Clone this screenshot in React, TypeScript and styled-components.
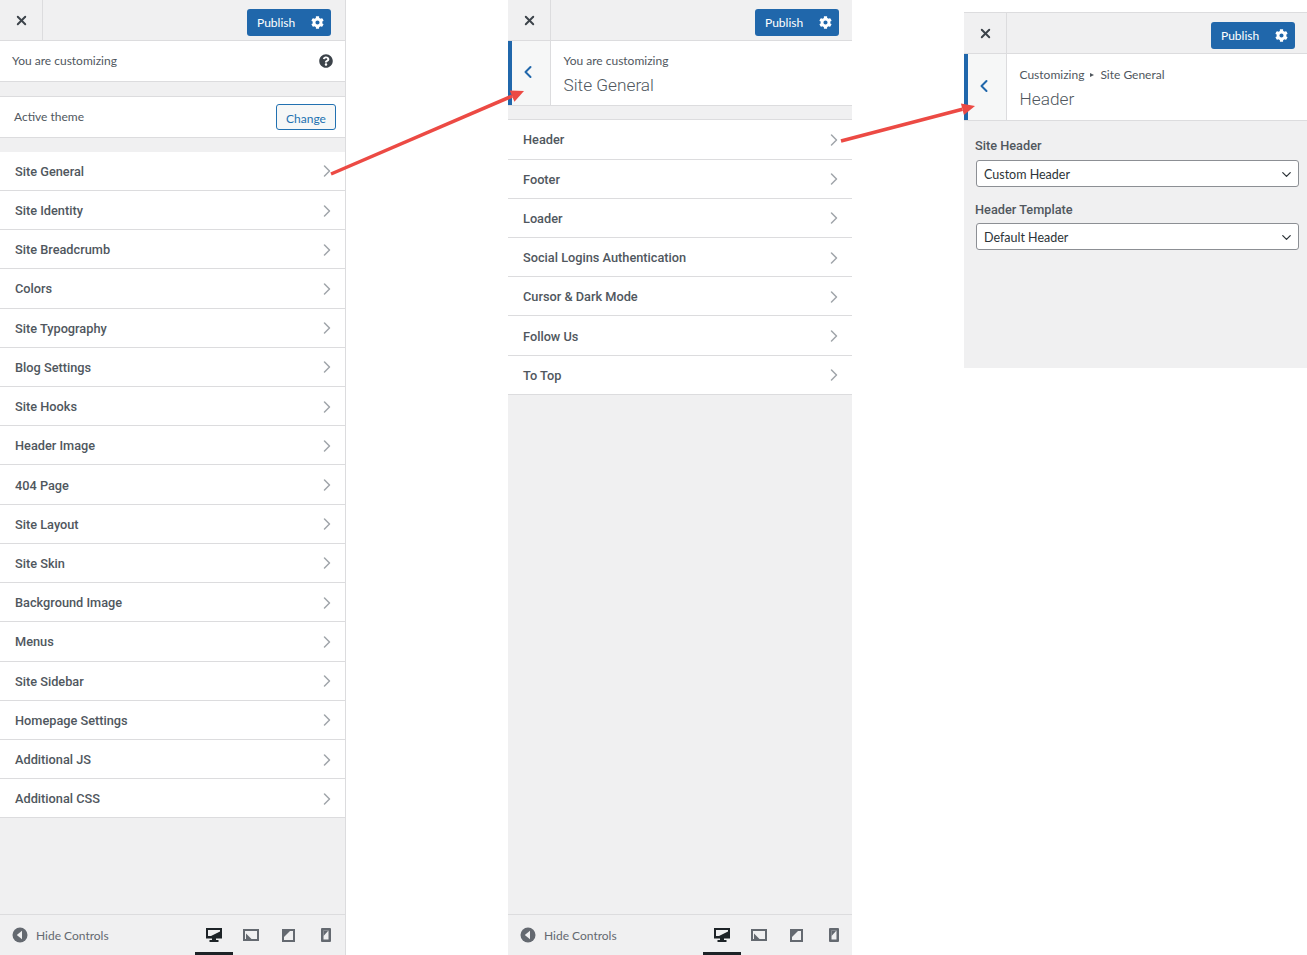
import React from "react";
import styled, { createGlobalStyle } from "styled-components";
import { FaCog, FaQuestionCircle } from "react-icons/fa";
import { ChevronDown, ChevronLeft, ChevronRight, X } from "lucide-react";

const GlobalStyle = createGlobalStyle`
  html, body { margin: 0; padding: 0; background: #fff; }
  body { font-family: Lato, Roboto, sans-serif; font-size: 12px; color: #50575e; }
  * { box-sizing: border-box; }
`;

const Page = styled.div`
  position: relative;
  width: 1307px;
  height: 955px;
  overflow: hidden;
  display: grid;
  grid-template-columns: 346px 162px 344px 112px 343px;
  align-items: start;
`;

const Panel = styled.section<{ $top?: number; $col: number; $height: number; $edge?: boolean }>`
  grid-column: ${(p) => p.$col};
  grid-row: 1;
  display: flex;
  flex-direction: column;
  margin-top: ${(p) => p.$top ?? 0}px;
  height: ${(p) => p.$height}px;
  background: #f0f0f1;
  border-right: ${(p) => (p.$edge ? "1px solid #dcdcde" : "none")};
  ${(p) => (p.$top ? "border-top: 1px solid #dcdcde;" : "")}
`;

const TopBar = styled.header<{ $pad: number }>`
  flex: 0 0 41px;
  display: flex;
  align-items: center;
  justify-content: space-between;
  border-bottom: 1px solid #dcdcde;
  padding-right: ${(p) => p.$pad}px;
`;

const CloseButton = styled.button`
  width: 43px;
  height: 40px;
  padding: 0;
  display: flex;
  align-items: center;
  justify-content: center;
  background: none;
  border: 0;
  border-right: 1px solid #dcdcde;
  color: #3c434a;
`;

const Publish = styled.div`
  width: 84px;
  height: 27px;
  display: flex;
  align-items: center;
  justify-content: space-between;
  padding: 0 7px 0 10px;
  background: #2067ab;
  color: #fff;
  border-radius: 3px;
  margin-top: 4px;
`;

const InfoRow = styled.div`
  height: 41px;
  display: flex;
  align-items: center;
  justify-content: space-between;
  padding: 0 12px 1px 12px;
  background: #fff;
  border-bottom: 1px solid #dcdcde;
  color: #50575e;
`;

const ThemeRow = styled(InfoRow)`
  margin-top: 14px;
  border-top: 1px solid #dcdcde;
  height: 42px;
  padding: 0 9px 0 14px;
  margin-bottom: 13.7px;
`;

const ThemeLabel = styled.span`
  margin-bottom: 2px;
`;

const ChangeButton = styled.div`
  width: 60px;
  height: 26px;
  display: flex;
  align-items: center;
  justify-content: center;
  border: 1px solid #2271b1;
  border-radius: 3px;
  color: #2271b1;
  background: #f6f7f7;
  padding-top: 2px;
`;

const List = styled.div<{ $divider?: boolean }>`
  display: flex;
  flex-direction: column;
  background: #fff;
  border-top: ${(p) => (p.$divider ? "1px solid #dcdcde" : "none")};
`;

const Row = styled.div`
  height: 39.22px;
  flex: 0 0 39.22px;
  display: flex;
  align-items: center;
  justify-content: space-between;
  padding: 1px 8px 0 15px;
  border-bottom: 1px solid #dcdcde;
  color: #50575e;
  font-family: Roboto, sans-serif;
  font-weight: 500;
  font-size: 12.75px;
`;

const RowLabel = styled.span`
  white-space: nowrap;
`;

const Chevron = styled(ChevronRight)`
  color: #a0a5aa;
  flex: none;
`;

const SectionHead = styled.div<{ $height: number }>`
  flex: 0 0 ${(p) => p.$height}px;
  display: flex;
  background: #fff;
  border-bottom: 1px solid #dcdcde;
`;

const BackButton = styled.div`
  flex: 0 0 43px;
  display: flex;
  align-items: center;
  justify-content: center;
  padding: 0 6px 2px 0;
  background: #f6f7f7;
  border-left: 4px solid #2067ab;
  border-right: 1px solid #dcdcde;
  color: #2067ab;
`;

const HeadText = styled.div<{ $top: number }>`
  display: flex;
  flex-direction: column;
  padding: ${(p) => p.$top}px 0 0 12.5px;
  gap: 2px;
`;

const Crumb = styled.div`
  display: flex;
  align-items: center;
  gap: 6px;
  line-height: 18px;
  color: #50575e;
`;

const CrumbMark = styled.span`
  width: 0;
  height: 0;
  border-left: 4px solid #50575e;
  border-top: 2.5px solid transparent;
  border-bottom: 2.5px solid transparent;
`;

const SectionTitle = styled.div`
  font-family: Roboto, sans-serif;
  font-size: 17.25px;
  font-weight: 300;
  line-height: 26px;
  color: #50575e;
`;

const Spacer = styled.div`
  flex: 1;
`;

const SectionGap = styled.div`
  flex: 0 0 13.3px;
`;

const Footer = styled.footer`
  flex: 0 0 41px;
  display: flex;
  align-items: stretch;
  border-top: 1px solid #dcdcde;
  padding-left: 12px;
`;

const HideControls = styled.div`
  flex: 0 0 183px;
  display: flex;
  align-items: center;
  gap: 8px;
  color: #646970;
`;

const Devices = styled.div`
  display: flex;
  flex: none;
`;

const DeviceTab = styled.div<{ $active?: boolean }>`
  width: 37.5px;
  display: flex;
  align-items: center;
  justify-content: center;
  padding-top: 3px;
  color: ${(p) => (p.$active ? "#1d2327" : "#646970")};
  border-bottom: 3px solid ${(p) => (p.$active ? "#1d2327" : "transparent")};
`;

const ControlArea = styled.div`
  display: flex;
  flex-direction: column;
  padding: 15px 8px 0 11px;
`;

const FieldLabel = styled.label`
  font-family: Roboto, sans-serif;
  font-size: 12.75px;
  font-weight: 500;
  line-height: 18px;
  color: #50575e;
  padding-top: 1px;
  margin-bottom: 5px;
`;

const SelectBox = styled.div`
  height: 27px;
  margin: 0 0 13px 1px;
  display: flex;
  align-items: center;
  justify-content: space-between;
  padding: 1px 4px 0 7px;
  background: #fff;
  border: 1px solid #8c8f94;
  border-radius: 3px;
  color: #2c3338;
  font-size: 12.5px;
`;

const SecondSelect = styled(SelectBox)`
  margin-top: -1px;
`;

const Overlay = styled.svg`
  position: absolute;
  inset: 0;
  pointer-events: none;
`;

const Desktop = () => (
  <svg width="16" height="15" viewBox="0 0 16 15">
    <path fill="currentColor" d="M0 0h16v10.5H10v1.5h2.5v2h-9v-2H6v-1.5H0z" />
    <path fill="#f0f0f1" d="M2 2h12v1.5L5 8H2z" />
  </svg>
);
const TabletLandscape = () => (
  <svg width="16" height="12" viewBox="0 0 16 12">
    <path fill="currentColor" fillRule="evenodd" d="M0 0h16v12H0zM2 2v8h12V2z" />
    <path fill="currentColor" d="M3 4.5l5.5 5.5H3z" />
  </svg>
);
const TabletPortrait = () => (
  <svg width="13" height="13" viewBox="0 0 13 13">
    <path fill="currentColor" fillRule="evenodd" d="M0 0h13v13H0zM2 2v9h9V2z" />
    <path fill="currentColor" d="M2 2h6L2 8z" />
  </svg>
);
const Mobile = () => (
  <svg width="10" height="14" viewBox="0 0 10 14">
    <path fill="currentColor" fillRule="evenodd" d="M1 0h8a1 1 0 0 1 1 1v12a1 1 0 0 1-1 1H1a1 1 0 0 1-1-1V1a1 1 0 0 1 1-1zM2.5 2.5v9h5v-9z" />
    <path fill="currentColor" d="M2.5 2.5h5L2.5 8z" />
  </svg>
);

const Bar = ({ pad }: { pad: number }) => (
  <TopBar $pad={pad}>
    <CloseButton aria-label="Close">
      <X size={15} strokeWidth={3} />
    </CloseButton>
    <Publish>
      Publish
      <FaCog size={13} />
    </Publish>
  </TopBar>
);

const Foot = () => (
  <Footer>
    <HideControls>
      <svg width="16" height="16" viewBox="0 0 16 16">
        <circle cx="8" cy="8" r="7.5" fill="#646970" />
        <path fill="#f0f0f1" d="M10 3.8v8.4L4.8 8z" />
      </svg>
      Hide Controls
    </HideControls>
    <Devices>
      <DeviceTab $active><Desktop /></DeviceTab>
      <DeviceTab><TabletLandscape /></DeviceTab>
      <DeviceTab><TabletPortrait /></DeviceTab>
      <DeviceTab><Mobile /></DeviceTab>
    </Devices>
  </Footer>
);

const rootItems = ["Site General", "Site Identity", "Site Breadcrumb", "Colors", "Site Typography", "Blog Settings", "Site Hooks", "Header Image", "404 Page", "Site Layout", "Site Skin", "Background Image", "Menus", "Site Sidebar", "Homepage Settings", "Additional JS", "Additional CSS"];
const subItems = ["Header", "Footer", "Loader", "Social Logins Authentication", "Cursor & Dark Mode", "Follow Us", "To Top"];

const Items = ({ items, divider }: { items: string[]; divider?: boolean }) => (
  <List $divider={divider}>
    {items.map((t) => (
      <Row key={t}>
        <RowLabel>{t}</RowLabel>
        <Chevron size={20} strokeWidth={1.8} />
      </Row>
    ))}
  </List>
);

const Arrow = ({ x1, y1, x2, y2 }: { x1: number; y1: number; x2: number; y2: number }) => {
  const a = Math.atan2(y2 - y1, x2 - x1);
  const len = 13;
  const w = 6;
  const bx = x2 - len * Math.cos(a);
  const by = y2 - len * Math.sin(a);
  const nx = -Math.sin(a) * w;
  const ny = Math.cos(a) * w;
  return (
    <>
      <line x1={x1} y1={y1} x2={bx} y2={by} stroke="#ec4a44" strokeWidth="3.5" />
      <polygon points={`${x2},${y2} ${bx + nx},${by + ny} ${bx - nx},${by - ny}`} fill="#ec4a44" />
    </>
  );
};

export default function App() {
  return (
    <Page>
      <GlobalStyle />
      <Panel $col={1} $height={955} $edge>
        <Bar pad={14} />
        <InfoRow>
          You are customizing
          <FaQuestionCircle size={14} color="#3c434a" />
        </InfoRow>
        <ThemeRow>
          <ThemeLabel>Active theme</ThemeLabel>
          <ChangeButton>Change</ChangeButton>
        </ThemeRow>
        <Items items={rootItems} />
        <Spacer />
        <Foot />
      </Panel>

      <Panel $col={3} $height={955}>
        <Bar pad={13} />
        <SectionHead $height={65}>
          <BackButton><ChevronLeft size={20} strokeWidth={2.4} /></BackButton>
          <HeadText $top={11}>
            <Crumb>You are customizing</Crumb>
            <SectionTitle>Site General</SectionTitle>
          </HeadText>
        </SectionHead>
        <SectionGap />
        <Items items={subItems} divider />
        <Spacer />
        <Foot />
      </Panel>

      <Panel $col={5} $top={12} $height={356}>
        <Bar pad={12} />
        <SectionHead $height={67}>
          <BackButton><ChevronLeft size={20} strokeWidth={2.4} /></BackButton>
          <HeadText $top={12}>
            <Crumb>Customizing <CrumbMark /> Site General</Crumb>
            <SectionTitle>Header</SectionTitle>
          </HeadText>
        </SectionHead>
        <ControlArea>
          <FieldLabel>Site Header</FieldLabel>
          <SelectBox>Custom Header<ChevronDown size={15} color="#2c3338" /></SelectBox>
          <FieldLabel>Header Template</FieldLabel>
          <SecondSelect>Default Header<ChevronDown size={15} color="#2c3338" /></SecondSelect>
        </ControlArea>
      </Panel>

      <Overlay width="1307" height="955" viewBox="0 0 1307 955">
        <Arrow x1={331} y1={174} x2={524} y2={91} />
        <Arrow x1={841} y1={141} x2={975} y2={106} />
      </Overlay>
    </Page>
  );
}
